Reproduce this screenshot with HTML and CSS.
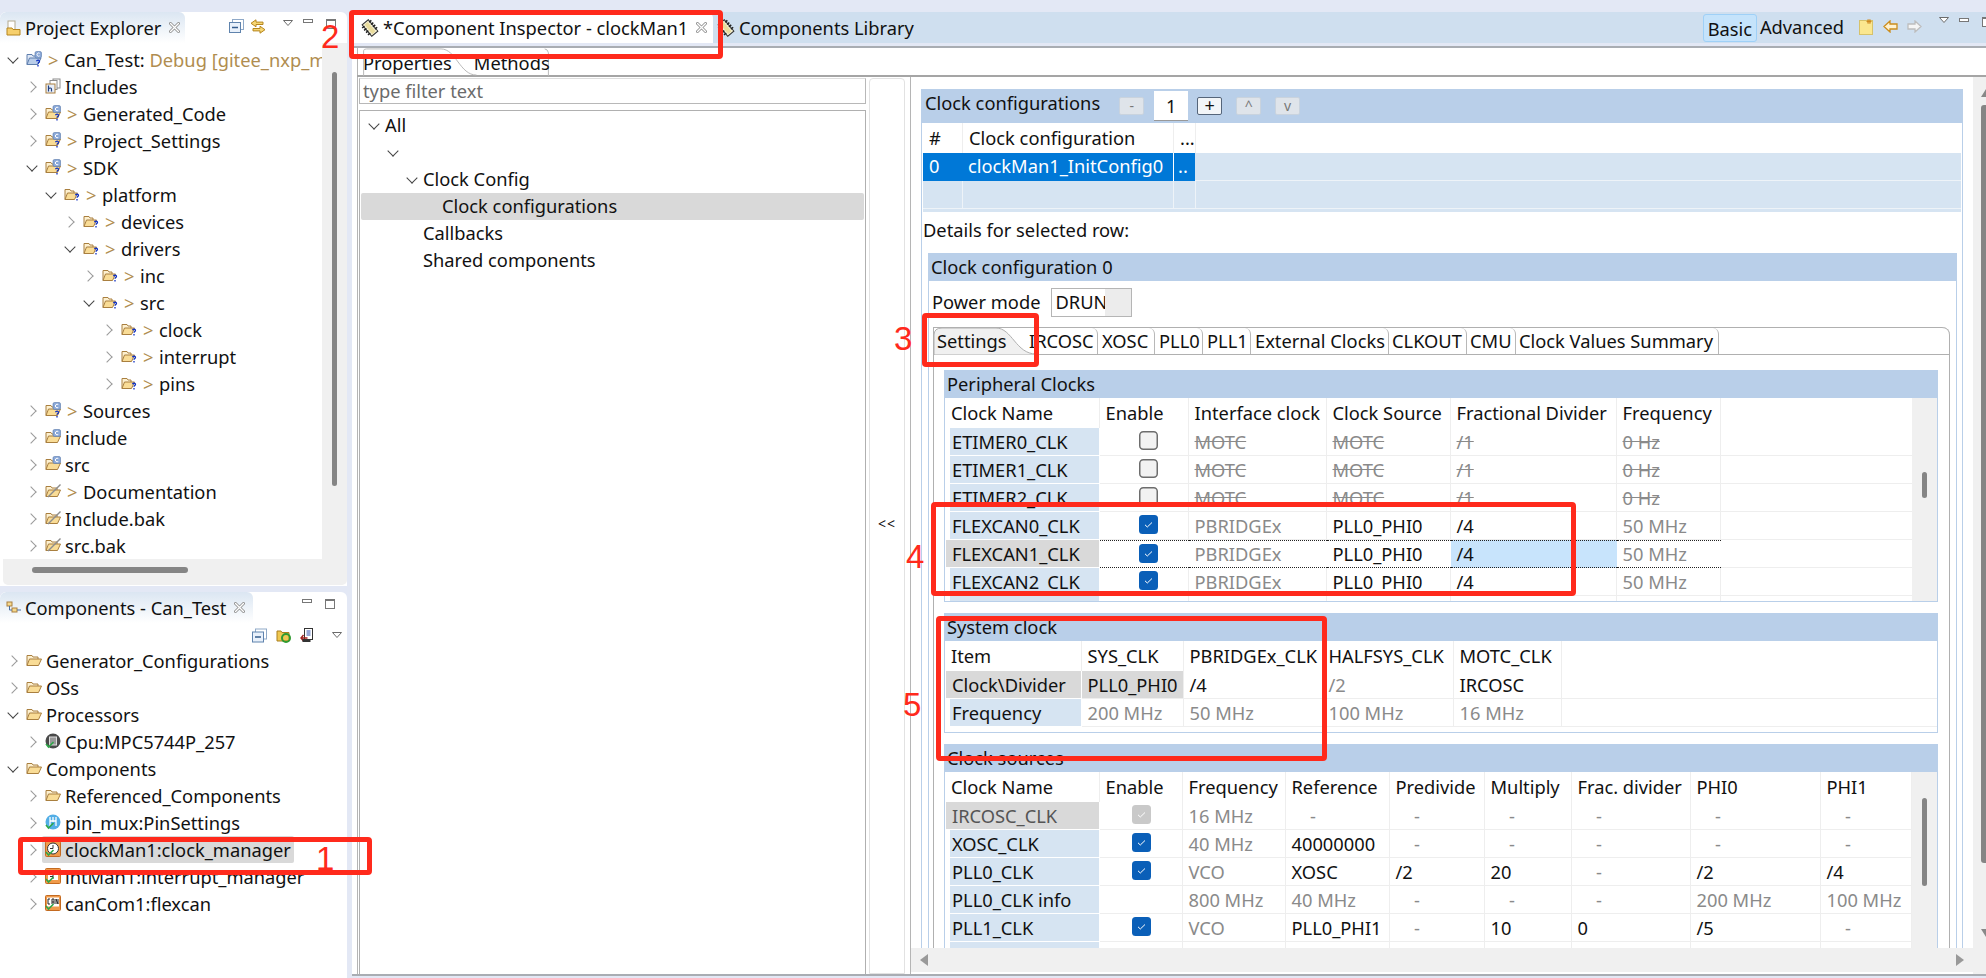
FILE: index.html
```html
<!DOCTYPE html>
<html lang="en">
<head>
<meta charset="utf-8">
<title>Component Inspector - clockMan1</title>
<link rel="stylesheet" href="styles.css">
</head>
<body>
<svg class="defs" aria-hidden="true">
  <symbol id="fld" viewBox="0 0 16 16"><path d="M1 13.5V3.5h5l1 1.5h5v2" fill="#fdf0cf" stroke="#a97f3f"/><path d="M1 13.5 3.5 7H15.5l-3 6.5z" fill="#f9dc96" stroke="#a97f3f"/></symbol>
  <symbol id="srcf" viewBox="0 0 16 16"><use href="#fld"/><rect x="8" y="0.5" width="7.5" height="7" rx="1.5" fill="#8aa8d8" stroke="#5577aa" stroke-width=".6"/><path d="M13.3 2.6a1.8 1.8 0 1 0 0 2.8" fill="none" stroke="#fff"/></symbol>
  <symbol id="srcq" viewBox="0 0 16 16"><use href="#srcf"/><path d="M10.5 10.2c.4-1.4 3-1.4 3 .2 0 1.2-1.5 1.1-1.5 2.4M12 14v1.6" fill="none" stroke="#1030c0" stroke-width="1.3"/></symbol>
  <symbol id="fldq" viewBox="0 0 16 16"><path d="M1 13.5V3.5h5l1 1.5h3v2" fill="#fdf0cf" stroke="#a97f3f"/><path d="M1 13.5 3.5 7H13.5l-3 6.5z" fill="#f9dc96" stroke="#a97f3f"/><path d="M11.5 9.2c.4-1.3 3-1.3 3 .2 0 1.2-1.5 1.1-1.5 2.4M13 13v1.6" fill="none" stroke="#1030c0" stroke-width="1.3"/></symbol>
  <symbol id="proj" viewBox="0 0 16 16"><path d="M1 13.5V3.5h5l1 1.5h5v2" fill="#dfe8f6" stroke="#5f7fae"/><path d="M1 13.5 3.5 7H15l-3 6.5z" fill="#b9cde9" stroke="#5f7fae"/><rect x="9" y="0.5" width="6.5" height="6.5" rx="1.5" fill="#8aa8d8" stroke="#5577aa" stroke-width=".6"/><path d="M13.6 2.3a1.6 1.6 0 1 0 0 2.6" fill="none" stroke="#fff"/><path d="M10.5 10.2c.4-1.4 3-1.4 3 .2 0 1.2-1.5 1.1-1.5 2.4M12 14v1.6" fill="none" stroke="#1030c0" stroke-width="1.3"/></symbol>
  <symbol id="excl" viewBox="0 0 16 16"><use href="#fld"/><path d="M3 14 15.5 1.5" stroke="#8d8d8d" stroke-width="1.4"/></symbol>
  <symbol id="incl" viewBox="0 0 16 16"><rect x="8" y="1" width="7" height="9" fill="#fff" stroke="#8c8c8c"/><rect x="5" y="2.5" width="7" height="9" fill="#fff" stroke="#8c8c8c"/><rect x="1" y="6" width="9" height="9" fill="#e7eef9" stroke="#a97f3f"/><path d="M3.5 7.5v6M3.5 11c1-1.5 3-1.3 3 .3v2.200" fill="none" stroke="#1f3f7f" stroke-width="1.200"/></symbol>
  <symbol id="close" viewBox="0 0 11 11"><path d="M1.500 1.500 9.500 9.500M9.500 1.500 1.500 9.500" stroke="#8f8f8f" stroke-width="3" stroke-linecap="round"/><path d="M1.500 1.500 9.500 9.500M9.500 1.500 1.500 9.500" stroke="#fff" stroke-width="1.300" stroke-linecap="round"/></symbol>
  <symbol id="menu" viewBox="0 0 10 6"><path d="M.5.500h9L5 5.500z" fill="#fff" stroke="#6b6b6b"/></symbol>
  <symbol id="chip" viewBox="0 0 18 18"><g transform="rotate(-40 9 9)"><rect x="5" y="1.500" width="8" height="15" fill="#f4efd4" stroke="#333"/><path d="M3 4h12M3 7h12M3 10h12M3 13h12" stroke="#222" stroke-width="1.500" stroke-dasharray="3 6"/><rect x="7" y="3" width="4" height="12" fill="#e9dc9c"/></g></symbol>
  <symbol id="cnew" viewBox="0 0 14 16"><rect x=".5" y="1.500" width="13" height="14" fill="#fbe78f" stroke="#d6c26a"/><path d="M10 0v5M7.500 2.500h5M8 .7l4 3.600M12 .7 8 4.300" stroke="#cf8a20"/></symbol>
  <symbol id="arrl" viewBox="0 0 15 13"><path d="M7 1 1 6.500 7 12V9h7V4H7z" fill="#fff2cf" stroke="#cc8d1c" stroke-width="1.300"/></symbol>
  <symbol id="arrr" viewBox="0 0 15 13"><path d="M8 1l6 5.500L8 12V9H1V4h7z" fill="#f5f5f5" stroke="#bdbdbd" stroke-width="1.300"/></symbol>
  <symbol id="collapse" viewBox="0 0 15 14"><rect x="3.500" y=".5" width="11" height="10" fill="#fff" stroke="#8fa9c8"/><rect x=".5" y="3.500" width="11" height="10" fill="#e9f1fb" stroke="#5f83ad"/><path d="M3 8.500h6" stroke="#355c8c" stroke-width="1.400"/></symbol>
  <symbol id="linked" viewBox="0 0 16 15"><path d="M6 .8 1 4.300 6 7.800V5.500h7V3.100H6z" fill="#f7d774" stroke="#b5851f"/><path d="M10 7.200 15 10.700 10 14.200V11.900H3V9.500h7z" fill="#f7d774" stroke="#b5851f"/></symbol>
  <symbol id="pe" viewBox="0 0 16 16"><rect x="2" y="1" width="7" height="9" fill="#fff" stroke="#b3a98e"/><path d="M1 15V8h5l1 1.500h7V15z" fill="#f6cf6c" stroke="#b5851f"/></symbol>
  <symbol id="comp" viewBox="0 0 16 14"><rect x="1" y="1" width="5" height="4" fill="#f6d98e" stroke="#a97f3f"/><rect x="6" y="7" width="5" height="4" fill="#f6d98e" stroke="#a97f3f"/><path d="M3.500 5v4H6M11 9h4" fill="none" stroke="#4a6fa0"/></symbol>
  <symbol id="sync" viewBox="0 0 15 15"><path d="M1 13V3h4l1 1.500h7V13z" fill="#f0c850" stroke="#a97f1f"/><circle cx="10" cy="10" r="4" fill="none" stroke="#2f9a2f" stroke-width="2"/></symbol>
  <symbol id="gen" viewBox="0 0 14 15"><rect x="4" y=".5" width="8" height="11" fill="#fff" stroke="#333"/><path d="M6 3h4M6 5h4M6 7h4" stroke="#2a4fb0"/><path d="M0 10h7M3 7l-2.500 3L3 13" fill="none" stroke="#a02020" stroke-width="1.400"/><rect x="2" y="11" width="8" height="3" fill="#333"/></symbol>
  <symbol id="cpu" viewBox="0 0 16 16"><circle cx="8" cy="8" r="7.500" fill="#4a4a4a"/><rect x="4.500" y="4" width="7" height="8" fill="#999" stroke="#ddd"/><path d="M1 11l2.500 3 5-5" fill="none" stroke="#2fa84a" stroke-width="1.600"/></symbol>
  <symbol id="pin" viewBox="0 0 16 16"><circle cx="8" cy="8" r="7.500" fill="#52aee6"/><path d="M5 3v9M8 3v5M11 3v9M5 7h6" stroke="#fff" stroke-width="1.300"/><path d="M1 11l2.500 3 5-5" fill="none" stroke="#2fa84a" stroke-width="1.600"/></symbol>
  <symbol id="clk" viewBox="0 0 16 16"><rect x=".5" y=".5" width="15" height="15" rx="1" fill="#f09a4a" stroke="#c46a20"/><circle cx="8" cy="7.500" r="5.500" fill="#fff" stroke="#333"/><path d="M8 4v3.500H5" fill="none" stroke="#333"/><path d="M1 11l2.500 3 5-5" fill="none" stroke="#2fa84a" stroke-width="1.600"/></symbol>
  <symbol id="intr" viewBox="0 0 16 16"><rect x=".5" y=".5" width="15" height="15" rx="1" fill="#f09a4a" stroke="#c46a20"/><rect x="3" y="3" width="10" height="9" fill="#fff"/><path d="M5 5h6M8 5v6M5 8.500h3" stroke="#333"/><path d="M1 11l2.500 3 5-5" fill="none" stroke="#2fa84a" stroke-width="1.600"/></symbol>
  <symbol id="can" viewBox="0 0 16 16"><rect x=".5" y=".5" width="15" height="15" rx="1" fill="#f09a4a" stroke="#c46a20"/><rect x="2" y="2.500" width="12" height="9" fill="#fff"/><path d="M3 4H5M3 4v5M3 9h2M7 9V4h2v5M7 7h2M11 9V4l2 5V4" fill="none" stroke="#222"/><path d="M1 11l2.500 3 5-5" fill="none" stroke="#2fa84a" stroke-width="1.600"/></symbol>
  <symbol id="tick" viewBox="0 0 19 19"><rect width="19" height="19" rx="3.500" fill="#0a5fb8"/><path d="M6 9.800l2.300 2.200L13 7.500" fill="none" stroke="#fff" stroke-width="1"/></symbol>
  <symbol id="tickoff" viewBox="0 0 19 19"><rect width="19" height="19" rx="3.500" fill="#c9c9c9"/><path d="M6 9.800l2.300 2.200L13 7.500" fill="none" stroke="#fff" stroke-width="1"/></symbol>
  <symbol id="untick" viewBox="0 0 19 19"><rect x=".75" y=".75" width="17.500" height="17.500" rx="3.500" fill="#f2f2f2" stroke="#6d6d6d" stroke-width="1.500"/></symbol>
</svg>

<div class="left">
  <section class="view topview">
    <header class="viewbar">
      <div class="viewtab tab-pe"><svg class="ic"><use href="#pe"/></svg><span>Project Explorer</span><svg class="x"><use href="#close"/></svg></div>
      <div class="viewtools">
        <svg class="tool t-collapse"><use href="#collapse"/></svg>
        <svg class="tool t-link"><use href="#linked"/></svg>
        <svg class="mn t-menu"><use href="#menu"/></svg>
        <i class="minb"></i><i class="maxb"></i>
      </div>
    </header>
    <div class="viewbody">
      <div class="treelist">
        <div class="tr l0"><i class="chev open"></i><svg class="ic"><use href="#proj"/></svg><span class="dec">&gt;</span>Can_Test:<span class="qual">&nbsp;Debug [gitee_nxp_m</span></div>
        <div class="tr l1"><i class="chev"></i><svg class="ic"><use href="#incl"/></svg>Includes</div>
        <div class="tr l1"><i class="chev"></i><svg class="ic"><use href="#srcq"/></svg><span class="dec">&gt;</span>Generated_Code</div>
        <div class="tr l1"><i class="chev"></i><svg class="ic"><use href="#srcq"/></svg><span class="dec">&gt;</span>Project_Settings</div>
        <div class="tr l1"><i class="chev open"></i><svg class="ic"><use href="#srcq"/></svg><span class="dec">&gt;</span>SDK</div>
        <div class="tr l2"><i class="chev open"></i><svg class="ic"><use href="#fldq"/></svg><span class="dec">&gt;</span>platform</div>
        <div class="tr l3"><i class="chev"></i><svg class="ic"><use href="#fldq"/></svg><span class="dec">&gt;</span>devices</div>
        <div class="tr l3"><i class="chev open"></i><svg class="ic"><use href="#fldq"/></svg><span class="dec">&gt;</span>drivers</div>
        <div class="tr l4"><i class="chev"></i><svg class="ic"><use href="#fldq"/></svg><span class="dec">&gt;</span>inc</div>
        <div class="tr l4"><i class="chev open"></i><svg class="ic"><use href="#fldq"/></svg><span class="dec">&gt;</span>src</div>
        <div class="tr l5"><i class="chev"></i><svg class="ic"><use href="#fldq"/></svg><span class="dec">&gt;</span>clock</div>
        <div class="tr l5"><i class="chev"></i><svg class="ic"><use href="#fldq"/></svg><span class="dec">&gt;</span>interrupt</div>
        <div class="tr l5"><i class="chev"></i><svg class="ic"><use href="#fldq"/></svg><span class="dec">&gt;</span>pins</div>
        <div class="tr l1"><i class="chev"></i><svg class="ic"><use href="#srcq"/></svg><span class="dec">&gt;</span>Sources</div>
        <div class="tr l1"><i class="chev"></i><svg class="ic"><use href="#srcf"/></svg>include</div>
        <div class="tr l1"><i class="chev"></i><svg class="ic"><use href="#srcf"/></svg>src</div>
        <div class="tr l1"><i class="chev"></i><svg class="ic"><use href="#excl"/></svg><span class="dec">&gt;</span>Documentation</div>
        <div class="tr l1"><i class="chev"></i><svg class="ic"><use href="#excl"/></svg>Include.bak</div>
        <div class="tr l1"><i class="chev"></i><svg class="ic"><use href="#excl"/></svg>src.bak</div>
      </div>
      <div class="vsb-left"><i class="thumb-v"></i></div>
    </div>
    <div class="hsb-left"><i class="thumb-h"></i></div>
  </section>

  <section class="view bottomview">
    <header class="viewbar">
      <div class="viewtab tab-comp"><svg class="ic"><use href="#comp"/></svg><span>Components - Can_Test</span><svg class="x"><use href="#close"/></svg></div>
      <div class="viewtools viewtools-b"><i class="minb"></i><i class="maxb"></i></div>
    </header>
    <div class="bartools">
      <svg class="tool"><use href="#collapse"/></svg>
      <svg class="tool"><use href="#sync"/></svg>
      <svg class="tool"><use href="#gen"/></svg>
      <svg class="mn"><use href="#menu"/></svg>
    </div>
    <div class="treelist">
      <div class="tr l0"><i class="chev"></i><svg class="ic"><use href="#fld"/></svg>Generator_Configurations</div>
      <div class="tr l0"><i class="chev"></i><svg class="ic"><use href="#fld"/></svg>OSs</div>
      <div class="tr l0"><i class="chev open"></i><svg class="ic"><use href="#fld"/></svg>Processors</div>
      <div class="tr l1"><i class="chev"></i><svg class="ic"><use href="#cpu"/></svg>Cpu:MPC5744P_257</div>
      <div class="tr l0"><i class="chev open"></i><svg class="ic"><use href="#fld"/></svg>Components</div>
      <div class="tr l1"><i class="chev"></i><svg class="ic"><use href="#fld"/></svg>Referenced_Components</div>
      <div class="tr l1"><i class="chev"></i><svg class="ic"><use href="#pin"/></svg>pin_mux:PinSettings</div>
      <div class="tr l1"><i class="chev"></i><span class="treesel"><svg class="ic"><use href="#clk"/></svg>clockMan1:clock_manager</span></div>
      <div class="tr l1"><i class="chev"></i><svg class="ic"><use href="#intr"/></svg>intMan1:interrupt_manager</div>
      <div class="tr l1"><i class="chev"></i><svg class="ic"><use href="#can"/></svg>canCom1:flexcan</div>
    </div>
  </section>
</div>

<main class="editor">
  <header class="edbar">
    <div class="edtab edtab-on"><svg class="chipic"><use href="#chip"/></svg><span>*Component Inspector - clockMan1</span><svg class="x"><use href="#close"/></svg></div>
    <div class="edtab"><svg class="chipic chipic-b"><use href="#chip"/></svg><span>Components Library</span></div>
    <div class="edtools">
      <span class="btn-basic">Basic</span><span class="btn-adv">Advanced</span>
      <svg class="e-new"><use href="#cnew"/></svg>
      <svg class="e-arr"><use href="#arrl"/></svg>
      <svg class="e-arr"><use href="#arrr"/></svg>
      <svg class="mn e-menu"><use href="#menu"/></svg>
      <i class="minb"></i><i class="maxb"></i>
    </div>
  </header>
  <div class="edframe">
    <div class="subtabs">
      <svg class="subcurve" viewBox="0 0 200 30"><path d="M1 30V3Q1 1 4 1H84C100 1 104 29 122 29" fill="none" stroke="#b5b5b5"/><path d="M195 1Q198 1 199 5V30" fill="none" stroke="#b5b5b5"/></svg>
      <span class="subtab">Properties</span><span class="subtab">Methods</span>
    </div>
    <div class="edmain">
      <div class="master">
        <div class="filter">type filter text</div>
        <div class="mtree">
          <div class="mt m0"><i class="chev open"></i>All</div>
          <div class="mt m1"><i class="chev open"></i></div>
          <div class="mt m2"><i class="chev open"></i>Clock Config</div>
          <div class="mt m3 mt-sel">Clock configurations</div>
          <div class="mt m4">Callbacks</div>
          <div class="mt m4">Shared components</div>
        </div>
      </div>
      <div class="sash">&lt;&lt;</div>
      <div class="details">
        <div class="detail-scroll">
          <div class="scrollbody">
            <div class="sec sec1">
              <div class="sechead sechead-l">Clock configurations
                <span class="mini mini-first dis">-</span><span class="countbox">1</span><span class="mini mini-plus">+</span><span class="mini dis mini-gap">^</span><span class="mini dis mini-gap">v</span>
              </div>
              <div class="secbody">
                <div class="cfgrow cfghead"><span>#</span><span>Clock configuration</span><span>...</span><span></span></div>
                <div class="cfgrow cfgsel"><span>0</span><span>clockMan1_InitConfig0</span><span>..</span><span></span></div>
                <div class="cfgrow cfgempty"><span></span><span></span><span></span><span></span></div>
                <div class="cfgband"></div>
                <div class="detailslabel">Details for selected row:</div>
                <div class="sec sec2">
                  <div class="sechead">Clock configuration 0</div>
                  <div class="secbody">
                    <div class="powerrow"><span>Power mode</span><span class="combo"><span class="combotext">DRUN</span><i class="combobtn"></i></span></div>
                    <div class="folder">
                      <div class="tabs">
                        <span class="ftab ftab-on"><svg class="settingcurve" viewBox="0 0 103 28"><path d="M0 28V8Q0 1 8 1H62C78 1 82 27 102 27V28z" fill="#f0f0f0" stroke="#b0b0b0"/></svg><span class="ftab-text">Settings</span></span>
                        <span class="ftab w-irc">IRCOSC</span><span class="ftab w-xosc">XOSC</span><span class="ftab w-pll">PLL0</span><span class="ftab w-pll">PLL1</span><span class="ftab w-ext">External Clocks</span><span class="ftab w-out">CLKOUT</span><span class="ftab w-cmu">CMU</span><span class="ftab w-sum">Clock Values Summary</span>
                      </div>
                      <div class="folderbody">
                        <div class="sec">
                          <div class="sechead">Peripheral Clocks</div>
                          <div class="tbl tbl-p">
                            <div class="tblmain">
                              <div class="row cols-p rowhead"><span>Clock Name</span><span>Enable</span><span>Interface clock</span><span>Clock Source</span><span>Fractional Divider</span><span>Frequency</span><span class="rest"></span></div>
                              <div class="row cols-p"><span class="name">ETIMER0_CLK</span><span class="chk"><svg><use href="#untick"/></svg></span><span class="strike">MOTC</span><span class="strike">MOTC</span><span class="strike">/1</span><span class="strike">0 Hz</span><span class="rest"></span></div>
                              <div class="row cols-p"><span class="name">ETIMER1_CLK</span><span class="chk"><svg><use href="#untick"/></svg></span><span class="strike">MOTC</span><span class="strike">MOTC</span><span class="strike">/1</span><span class="strike">0 Hz</span><span class="rest"></span></div>
                              <div class="row cols-p"><span class="name">ETIMER2_CLK</span><span class="chk"><svg><use href="#untick"/></svg></span><span class="strike">MOTC</span><span class="strike">MOTC</span><span class="strike">/1</span><span class="strike">0 Hz</span><span class="rest"></span></div>
                              <div class="row cols-p"><span class="name">FLEXCAN0_CLK</span><span class="chk"><svg><use href="#tick"/></svg></span><span class="gr">PBRIDGEx</span><span>PLL0_PHI0</span><span>/4</span><span class="gr">50 MHz</span><span class="rest"></span></div>
                              <div class="row cols-p row-focus"><span class="name name-sel">FLEXCAN1_CLK</span><span class="chk"><svg><use href="#tick"/></svg></span><span class="gr">PBRIDGEx</span><span>PLL0_PHI0</span><span class="edit">/4</span><span class="gr focus-end">50 MHz</span><span class="rest"></span></div>
                              <div class="row cols-p"><span class="name">FLEXCAN2_CLK</span><span class="chk"><svg><use href="#tick"/></svg></span><span class="gr">PBRIDGEx</span><span>PLL0_PHI0</span><span>/4</span><span class="gr">50 MHz</span><span class="rest"></span></div>
                              <div class="row cols-p"><span class="name"></span><span class="chk"></span><span></span><span></span><span></span><span></span><span class="rest"></span></div>
                            </div>
                            <div class="tblvsb"><i class="tblthumb thumb-p"></i></div>
                          </div>
                        </div>
                        <div class="sec">
                          <div class="sechead">System clock</div>
                          <div class="tbl tbl-s">
                            <div class="tblmain">
                              <div class="row cols-s rowhead"><span>Item</span><span>SYS_CLK</span><span>PBRIDGEx_CLK</span><span>HALFSYS_CLK</span><span>MOTC_CLK</span><span class="rest"></span></div>
                              <div class="row cols-s"><span class="name name-sel">Clock\Divider</span><span class="cell-sel">PLL0_PHI0</span><span>/4</span><span class="gr">/2</span><span>IRCOSC</span><span class="rest"></span></div>
                              <div class="row cols-s"><span class="name">Frequency</span><span class="gr">200 MHz</span><span class="gr">50 MHz</span><span class="gr">100 MHz</span><span class="gr">16 MHz</span><span class="rest"></span></div>
                            </div>
                          </div>
                        </div>
                        <div class="sec">
                          <div class="sechead">Clock sources</div>
                          <div class="tbl tbl-c">
                            <div class="tblmain">
                              <div class="row cols-c rowhead"><span>Clock Name</span><span>Enable</span><span>Frequency</span><span>Reference</span><span>Predivide</span><span>Multiply</span><span>Frac. divider</span><span>PHI0</span><span>PHI1</span></div>
                              <div class="row cols-c"><span class="name name-sel name-gr">IRCOSC_CLK</span><span class="chk"><svg><use href="#tickoff"/></svg></span><span class="gr">16 MHz</span><span class="dash">-</span><span class="dash">-</span><span class="dash">-</span><span class="dash">-</span><span class="dash">-</span><span class="dash">-</span></div>
                              <div class="row cols-c"><span class="name">XOSC_CLK</span><span class="chk"><svg><use href="#tick"/></svg></span><span class="gr">40 MHz</span><span>40000000</span><span class="dash">-</span><span class="dash">-</span><span class="dash">-</span><span class="dash">-</span><span class="dash">-</span></div>
                              <div class="row cols-c"><span class="name">PLL0_CLK</span><span class="chk"><svg><use href="#tick"/></svg></span><span class="gr">VCO</span><span>XOSC</span><span>/2</span><span>20</span><span class="dash">-</span><span>/2</span><span>/4</span></div>
                              <div class="row cols-c"><span class="name">PLL0_CLK info</span><span class="chk"></span><span class="gr">800 MHz</span><span class="gr">40 MHz</span><span class="dash">-</span><span class="dash">-</span><span class="dash">-</span><span class="gr">200 MHz</span><span class="gr">100 MHz</span></div>
                              <div class="row cols-c"><span class="name">PLL1_CLK</span><span class="chk"><svg><use href="#tick"/></svg></span><span class="gr">VCO</span><span>PLL0_PHI1</span><span class="dash">-</span><span>10</span><span>0</span><span>/5</span><span class="dash">-</span></div>
                              <div class="row cols-c"><span class="name"></span><span class="chk"></span><span></span><span></span><span></span><span></span><span></span><span></span><span></span></div>
                            </div>
                            <div class="tblvsb"><i class="tblthumb thumb-c"></i></div>
                          </div>
                        </div>
                      </div>
                    </div>
                  </div>
                </div>
              </div>
            </div>
          </div>
          <div class="detail-hsb"><i class="tri tri-l"></i><i class="tri tri-r"></i></div>
        </div>
        <div class="detail-vsb"><i class="tri tri-u"></i><i class="dv-thumb"></i><i class="tri tri-d"></i></div>
      </div>
    </div>
  </div>
</main>

<div class="mark mark1"></div><span class="num num1">1</span>
<div class="mark mark2"></div><span class="num num2">2</span>
<div class="mark mark3"></div><span class="num num3">3</span>
<div class="mark mark4"></div><span class="num num4">4</span>
<div class="mark mark5"></div><span class="num num5">5</span>
</body>
</html>
```

FILE: styles.css
```css
* { box-sizing: border-box; }
html, body { margin: 0; height: 100%; }
body {
  position: relative;
  width: 1986px;
  height: 978px;
  overflow: hidden;
  display: flex;
  padding-top: 12px;
  background: #e3e8f5;
  font: 18.3px/27px "Noto Sans", "Open Sans", sans-serif;
  color: #111;
}
.defs { position: absolute; width: 0; height: 0; }
i { display: block; font-style: normal; }

/* Left column */
.left { width: 347px; display: flex; flex-direction: column; flex: none; }
.view { background: #fff; border-radius: 6px 6px 0 0; overflow: hidden; }
.topview { height: 574px; margin-bottom: 6px; }
.bottomview { flex: 1; }
.viewbar { height: 31px; display: flex; position: relative; }
.viewtab {
  display: flex; align-items: center; padding-left: 6px; height: 31px;
  background: linear-gradient(#dbe6f2, #fff);
  border-radius: 6px 6px 0 0; flex: none;
}
.tab-pe { width: 185px; }
.tab-comp { width: 253px; }
.viewtab .ic { margin-right: 3px; }
.x { width: 11px; height: 11px; margin-left: 8px; flex: none; }
.viewtools { flex: 1; position: relative; display: flex; align-items: flex-start; padding: 7px 0 0 44px; }
.tool { width: 15px; height: 14px; flex: none; }
.t-link { width: 16px; height: 15px; margin-left: 6px; }
.mn { width: 10px; height: 6px; flex: none; }
.t-menu { margin: 1px 0 0 17px; }
.minb { width: 10px; height: 4px; border: 1px solid #777; background: #fff; margin: 0 0 0 10px; flex: none; }
.maxb { width: 10px; height: 10px; border: 1px solid #777; border-top-width: 2px; background: #fff; margin: 0 0 0 13px; flex: none; }
.viewtools-b { padding: 7px 0 0 39px; }
.bartools { height: 24px; display: flex; align-items: center; padding-left: 252px; gap: 9px; }
.bartools .tool { height: 15px; }
.bartools .mn { margin-left: 8px; }
.viewbody { height: 516px; display: flex; padding-top: 3px; }
.treelist { flex: 1; min-width: 0; overflow: hidden; }
.tr { height: 27px; padding-bottom: 1px; display: flex; align-items: center; white-space: nowrap; }
.l0 { padding-left: 9px; }
.l1 { padding-left: 28px; }
.l2 { padding-left: 47px; }
.l3 { padding-left: 66px; }
.l4 { padding-left: 85px; }
.l5 { padding-left: 104px; }
.chev {
  width: 8px; height: 8px; margin-right: 9px; flex: none; position: relative;
}
.chev::before {
  content: ""; display: block; width: 7px; height: 7px;
  border-right: 1px solid #9a9a9a; border-bottom: 1px solid #9a9a9a;
  transform: translate(-1px, 1px) rotate(-45deg);
}
.chev.open::before {
  border-color: #444;
  transform: translate(0, -1px) rotate(45deg);
}
.ic { width: 16px; height: 16px; margin-right: 4px; flex: none; }
.dec { display: inline-block; width: 18px; padding-left: 2px; color: #b08d50; flex: none; }
.qual { color: #b08d50; }
.treesel { display: flex; align-items: center; height: 27px; width: 252px; margin-left: -3px; padding-left: 3px; background: #d9d9d9; border-radius: 2px; }
.vsb-left { width: 25px; flex: none; background: #f0f0f0; margin-top: -3px; padding: 29px 0 0 10px; }
.thumb-v { width: 5px; height: 414px; background: #858585; border-radius: 3px; }
.hsb-left { height: 26px; background: #f0f0f0; padding: 8px 0 0 29px; margin-left: 3px; border-radius: 0 0 5px 5px; }
.thumb-h { width: 156px; height: 6px; background: #858585; border-radius: 3px; }

/* Editor */
.editor { flex: 1; margin-left: 5px; display: flex; flex-direction: column; min-width: 0; }
.edbar { height: 31px; display: flex; background: #cfdfef; flex: none; }
.edtab { display: flex; align-items: center; height: 31px; flex: none; }
.edtab-on { width: 361px; background: #fff; border-radius: 6px 6px 0 0; padding-left: 9px; margin-right: 9px; }
.chipic { width: 18px; height: 18px; margin-right: 4px; flex: none; }
.chipic-b { margin-left: -5px; }
.edtools { flex: 1; display: flex; align-items: center; justify-content: flex-end; padding-bottom: 2px; overflow: hidden; }
.btn-basic { height: 28px; width: 54px; margin-top: 2px; background: #c5e3fb; border: 1px solid #9fd0f7; border-radius: 3px; text-align: center; line-height: 27px; }
.btn-adv { margin: 0 15px 0 3px; }
.e-new { width: 14px; height: 16px; margin-right: 10px; }
.e-arr { width: 15px; height: 13px; margin-right: 9px; }
.e-menu { margin: -14px 0 0 8px; }
.edtools .minb { margin-top: -14px; }
.edtools .maxb { margin: -10px -1px 0 13px; width: 5px; border-right: 0; }
.edframe { flex: 1; margin-top: 3px; margin-bottom: 2px; padding-left: 5px; background: #fff; border-top: 2px solid #a9adb3; border-bottom: 2px solid #a9adb3; display: flex; flex-direction: column; min-height: 0; position: relative; }
.edframe::before { content: ""; position: absolute; left: 5px; top: 0; bottom: 0; border-left: 1px solid #b5b5b5; }
.subtabs { height: 29px; display: flex; border-bottom: 2px solid #a5a5a5; position: relative; padding-left: 6px; flex: none; line-height: 29px; }
.subcurve { position: absolute; left: 1px; top: 0; width: 196px; height: 28px; }
.subtab { margin-right: 22px; position: relative; }
.edmain { flex: 1; display: flex; min-height: 0; padding-left: 2px; }
.master { width: 507px; flex: none; display: flex; flex-direction: column; }
.filter { height: 26px; margin-top: 1px; border: 1px solid #b8b8b8; border-top-color: #ddd; padding-left: 3px; line-height: 24px; color: #6b6b6b; flex: none; }
.mtree { flex: 1; margin-top: 6px; border: 1px solid #b0b0b0; border-bottom: 0; padding: 1px 1px 0; }
.mt { height: 27px; padding-bottom: 2px; display: flex; align-items: center; white-space: nowrap; }
.m0 { padding-left: 9px; }
.m1 { padding-left: 28px; }
.m2 { padding-left: 47px; }
.m3 { padding-left: 81px; }
.m4 { padding-left: 62px; }
.mt .chev { margin-right: 7px; }
.mt-sel { background: #d9d9d9; border-radius: 2px; }
.sash { width: 36px; margin-left: 3px; margin-top: 1px; border: 1px solid #e2e2e2; border-radius: 4px 4px 0 0; flex: none; display: flex; align-items: center; justify-content: center; font-size: 14px; letter-spacing: 1px; padding-bottom: 6px; }
.details { flex: 1; min-width: 0; display: flex; margin-left: 5px; border-left: 1px solid #b5b5b5; }
.detail-scroll { flex: 1; min-width: 0; display: flex; flex-direction: column; }
.scrollbody { height: 871px; overflow: hidden; padding: 12px 11px 0 10px; flex: none; }
.detail-hsb { height: 24px; background: #f0f0f0; position: relative; flex: none; }
.detail-vsb { width: 13px; flex: none; background: #f0f0f0; position: relative; padding-left: 8px; }
.tri { position: absolute; width: 0; height: 0; }
.tri-l { left: 9px; top: 6px; border: 6px solid transparent; border-right: 8px solid #999; border-left: 0; }
.tri-r { right: 9px; top: 6px; border: 6px solid transparent; border-left: 8px solid #999; border-right: 0; }
.tri-u { top: 12px; left: 8px; border: 5px solid transparent; border-bottom: 8px solid #888; border-top: 0; }
.tri-d { bottom: 37px; left: 8px; border: 5px solid transparent; border-top: 8px solid #888; border-bottom: 0; }
.dv-thumb { width: 5px; height: 758px; margin-top: 28px; background: #858585; border-radius: 3px 0 0 3px; }

.sechead { height: 28px; background: #b9cfe9; padding-left: 3px; line-height: 28px; white-space: nowrap; display: flex; align-items: flex-start; flex: none; }
.sechead-l { height: 34px; line-height: 28px; padding-left: 4px; }
.sec + .sec { margin-top: 11px; }
.sec1 { width: 1042px; }
.secbody { border-left: 1px solid #b9cfe9; border-right: 1px solid #b9cfe9; padding: 0 1px; }
.sec1 > .secbody { padding: 0; height: 900px; }
.mini { width: 25px; height: 18px; background: #dfe4ea; border: 1px solid #c9d3de; border-radius: 2px; margin-top: 8px; text-align: center; font-size: 14px; line-height: 15px; color: #777; flex: none; }
.mini-first { margin-left: 19px; }
.mini-plus { margin-left: 9px; background: #f2f5f8; border-color: #55657a; color: #111; font-size: 18px; }
.mini-gap { margin-left: 14px; }
.countbox { width: 34px; height: 30px; margin: 2px 0 0 10px; background: #fff; border-bottom: 1px solid #999; text-align: center; line-height: 30px; font-size: 18px; flex: none; }
.cfgrow { display: grid; grid-template-columns: 39px 211px 22px 1fr; height: 28px; margin-left: 1px; margin-right: 1px; line-height: 26px; }
.cfgrow > span { padding-left: 6px; white-space: nowrap; overflow: hidden; }
.cfghead { height: 30px; line-height: 30px; background: #fff; }
.cfghead > span + span { border-left: 1px solid #eee; }
.cfghead > span:last-child { border-left: 1px solid #eee; }
.cfgsel > span:nth-child(-n+3) { background: #0078d7; color: #fff; }
.cfgsel > span:nth-child(3) { border-left: 1px solid #fff; padding-left: 4px; }
.cfgsel > span:last-child, .cfgempty > span { background: #d6e4f2; border-bottom: 1px solid #eef3f8; }
.cfgempty > span + span { border-left: 1px solid #eef3f8; }
.cfgband { height: 3px; background: #d6e4f2; margin: 0 1px; }
.detailslabel { height: 41px; padding: 3px 0 0 1px; line-height: 30px; }
.sec2 { width: 1029px; margin-left: 6px; }
.sec2 > .secbody { padding: 0; height: 700px; }
.powerrow { height: 46px; display: flex; align-items: center; padding: 0 0 5px 3px; gap: 11px; }
.combo { width: 81px; height: 29px; margin-top: 1px; display: flex; border: 1px solid #b5b5b5; overflow: hidden; flex: none; }
.combotext { width: 53px; padding-left: 3px; overflow: hidden; line-height: 26px; }
.combobtn { flex: 1; background: #ececec; }
.folder { margin: 0 6px 0 4px; height: 660px; border-left: 1px solid #b0b0b0; border-right: 1px solid #b0b0b0; border-radius: 0 8px 0 0; }
.tabs { height: 28px; display: flex; border-top: 1px solid #b0b0b0; border-bottom: 1px solid #b0b0b0; border-radius: 0 8px 0 0; margin-right: -1px; position: relative; line-height: 25px; }
.ftab { flex: none; padding-left: 3px; border-right: 1px solid #b8b8b8; border-radius: 0 6px 0 0; white-space: nowrap; position: relative; }
.ftab-on { width: 93px; border-right: 0; padding-left: 3px; }
.ftab-text { position: relative; }
.settingcurve { position: absolute; left: 0; top: -1px; width: 103px; height: 28px; }
.w-irc { width: 71px; padding-left: 2px; }
.w-xosc { width: 57px; padding-left: 4px; }
.w-pll { width: 48px; padding-left: 4px; }
.w-ext { width: 138px; padding-left: 4px; }
.w-out { width: 78px; padding-left: 3px; }
.w-cmu { width: 49px; padding-left: 3px; }
.w-sum { width: 203px; padding-left: 3px; }
.folderbody { padding: 15px 11px 0 10px; }
.tbl { display: flex; border-left: 1px solid #b9cfe9; border-right: 1px solid #b9cfe9; border-bottom: 1px solid #b9cfe9; overflow: hidden; }
.tbl-p { height: 204px; }
.tbl-s { height: 92px; }
.tbl-c { height: 250px; border-bottom: 0; }
.tblmain { flex: 1; min-width: 0; }
.tblvsb { width: 25px; flex: none; background: #f0f0f0; padding-left: 10px; }
.tblthumb { width: 5px; background: #858585; border-radius: 3px; }
.thumb-p { height: 26px; margin-top: 74px; }
.thumb-c { height: 88px; margin-top: 26px; }
.row { display: grid; height: 28px; line-height: 28px; white-space: nowrap; }
.row > span { padding-left: 5.5px; border-bottom: 1px solid #eee; border-right: 1px solid #eee; overflow: hidden; }
.row > .rest { border-right: 0; }
.rowhead { height: 30px; line-height: 29px; }
.rowhead > span { border-bottom: 0; }
.rowhead > span:first-child { padding-left: 6px; }
.rowhead > .rest { border: 0; }
.cols-p { grid-template-columns: 155px 89px 138px 124px 166px 104px 1fr; }
.cols-s { grid-template-columns: 137px 102px 139px 131px 108px 1fr; }
.cols-c { grid-template-columns: 155px 83px 103px 104px 95px 87px 119px 130px 1fr; }
.row > .name { margin-left: 5px; padding-left: 2px; background: #d6e4f2; border-right: 1px solid #fff; border-bottom: 1px solid #fff; }
.row > .name-sel { margin-left: 1px; padding-left: 6px; background: #d9d9d9; }
.row > .name-gr { color: #555; }
.row > .cell-sel { background: #d9d9d9; }
.row > .chk { padding: 3px 0 0 0; display: flex; justify-content: center; }
.cols-p > .chk { padding-left: 8px; }
.chk svg { width: 19px; height: 19px; }
.gr { color: #8a8a8a; }
.strike { color: #8a8a8a; text-decoration: line-through; }
.row > .dash { color: #8a8a8a; padding-left: 24px; }
.row-focus > span:not(.name):not(.rest) { border-top: 1px dotted #222; border-bottom: 1px dotted #222; border-right: 0; line-height: 26px; }
.row-focus > span.focus-end { border-right: 1px dotted #222; }
.row-focus > span.edit { background: #c8e4fc; border-top: 1px solid #0078d7; }

/* Annotations */
.mark { position: absolute; border: 5px solid #ff2a1c; border-radius: 4px; }
.mark1 { left: 18px; top: 837px; width: 354px; height: 38px; }
.mark2 { left: 349px; top: 10px; width: 374px; height: 49px; }
.mark3 { left: 922px; top: 313px; width: 117px; height: 54px; }
.mark4 { left: 931px; top: 502px; width: 645px; height: 94px; }
.mark5 { left: 936px; top: 616px; width: 391px; height: 145px; }
.num { position: absolute; font: 33px/34px "Liberation Sans", sans-serif; color: #ff2a1c; }
.num1 { left: 316px; top: 842px; }
.num2 { left: 321px; top: 20px; }
.num3 { left: 894px; top: 322px; }
.num4 { left: 906px; top: 540px; }
.num5 { left: 903px; top: 688px; }
```
